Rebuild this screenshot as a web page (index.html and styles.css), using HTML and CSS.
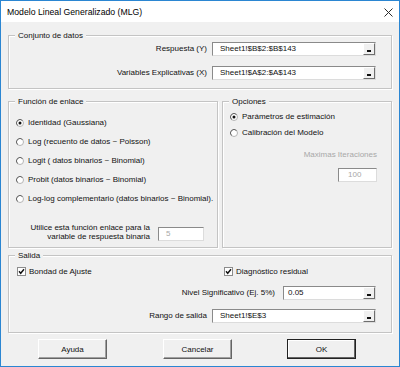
FILE: index.html
```html
<!DOCTYPE html>
<html lang="es">
<head>
  <meta charset="UTF-8">
  <meta name="viewport" content="width=device-width, initial-scale=1.0">
  <title>Modelo Lineal Generalizado (MLG)</title>
  <link rel="stylesheet" href="styles.css">
</head>
<body>
  <div class="window">
    <div class="titlebar">
      <span class="title">Modelo Lineal Generalizado (MLG)</span>
      <svg class="close" width="9" height="9" viewBox="0 0 9 9">
        <path d="M0.5 0.5 L8.5 8.5 M8.5 0.5 L0.5 8.5" stroke="#2b2b2b" stroke-width="1" fill="none"/>
      </svg>
    </div>

    <div class="content">
      <!-- Conjunto de datos -->
      <div class="group">
        <div class="group-title">Conjunto de datos</div>
        <div class="field-row first">
          <span class="label">Respuesta (Y)</span>
          <div class="ref"><span class="ref-text">Sheet1!$B$2:$B$143</span><span class="ref-btn"><i></i></span></div>
        </div>
        <div class="field-row">
          <span class="label">Variables Explicativas (X)</span>
          <div class="ref"><span class="ref-text">Sheet1!$A$2:$A$143</span><span class="ref-btn"><i></i></span></div>
        </div>
      </div>

      <div class="middle">
        <!-- Función de enlace -->
        <div class="group enlace">
          <div class="group-title">Función de enlace</div>
          <div class="radios">
            <div class="radio-row">
              <svg class="radio" width="8" height="8" viewBox="0 0 8 8">
                <circle cx="4" cy="4" r="3.5" fill="#fff" stroke="#b4b4b4"/>
                <path d="M1.5 6.5 A3.5 3.5 0 0 1 6.5 1.5" stroke="#6a6a6a" fill="none"/>
                <circle cx="4" cy="4" r="1.5" fill="#111"/>
              </svg>
              <span>Identidad (Gaussiana)</span>
            </div>
            <div class="radio-row">
              <svg class="radio" width="8" height="8" viewBox="0 0 8 8">
                <circle cx="4" cy="4" r="3.5" fill="#fff" stroke="#b4b4b4"/>
                <path d="M1.5 6.5 A3.5 3.5 0 0 1 6.5 1.5" stroke="#6a6a6a" fill="none"/>
              </svg>
              <span>Log (recuento de datos ~ Poisson)</span>
            </div>
            <div class="radio-row">
              <svg class="radio" width="8" height="8" viewBox="0 0 8 8">
                <circle cx="4" cy="4" r="3.5" fill="#fff" stroke="#b4b4b4"/>
                <path d="M1.5 6.5 A3.5 3.5 0 0 1 6.5 1.5" stroke="#6a6a6a" fill="none"/>
              </svg>
              <span>Logit ( datos binarios ~ Binomial)</span>
            </div>
            <div class="radio-row">
              <svg class="radio" width="8" height="8" viewBox="0 0 8 8">
                <circle cx="4" cy="4" r="3.5" fill="#fff" stroke="#b4b4b4"/>
                <path d="M1.5 6.5 A3.5 3.5 0 0 1 6.5 1.5" stroke="#6a6a6a" fill="none"/>
              </svg>
              <span>Probit (datos binarios ~ Binomial)</span>
            </div>
            <div class="radio-row">
              <svg class="radio" width="8" height="8" viewBox="0 0 8 8">
                <circle cx="4" cy="4" r="3.5" fill="#fff" stroke="#b4b4b4"/>
                <path d="M1.5 6.5 A3.5 3.5 0 0 1 6.5 1.5" stroke="#6a6a6a" fill="none"/>
              </svg>
              <span>Log-log complementario (datos binarios ~ Binomial).</span>
            </div>
          </div>
          <div class="binary-row">
            <span class="binary-label">Utilice esta función enlace para la<br>variable de respuesta binaria</span>
            <div class="textbox disabled binary">5</div>
          </div>
        </div>

        <!-- Opciones -->
        <div class="group opciones">
          <div class="group-title">Opciones</div>
          <div class="opt-radios">
            <div class="radio-row short">
              <svg class="radio" width="8" height="8" viewBox="0 0 8 8">
                <circle cx="4" cy="4" r="3.5" fill="#fff" stroke="#b4b4b4"/>
                <path d="M1.5 6.5 A3.5 3.5 0 0 1 6.5 1.5" stroke="#6a6a6a" fill="none"/>
                <circle cx="4" cy="4" r="1.5" fill="#111"/>
              </svg>
              <span>Parámetros de estimación</span>
            </div>
            <div class="radio-row short">
              <svg class="radio" width="8" height="8" viewBox="0 0 8 8">
                <circle cx="4" cy="4" r="3.5" fill="#fff" stroke="#b4b4b4"/>
                <path d="M1.5 6.5 A3.5 3.5 0 0 1 6.5 1.5" stroke="#6a6a6a" fill="none"/>
              </svg>
              <span>Calibración del Modelo</span>
            </div>
          </div>
          <div class="iter-label">Maximas Iteraciones</div>
          <div class="textbox disabled iter">100</div>
        </div>
      </div>

      <!-- Salida -->
      <div class="group">
        <div class="group-title">Salida</div>
        <div class="check-row">
          <div class="check first-check">
            <svg class="checkbox" width="9" height="9" viewBox="0 0 9 9">
              <rect x="0.5" y="0.5" width="8" height="8" fill="#fff" stroke="#8c8c8c"/>
              <path d="M2 4.3 L3.7 6.3 L7 2.2" stroke="#111" stroke-width="1.4" fill="none"/>
            </svg>
            <span>Bondad de Ajuste</span>
          </div>
          <div class="check">
            <svg class="checkbox" width="9" height="9" viewBox="0 0 9 9">
              <rect x="0.5" y="0.5" width="8" height="8" fill="#fff" stroke="#8c8c8c"/>
              <path d="M2 4.3 L3.7 6.3 L7 2.2" stroke="#111" stroke-width="1.4" fill="none"/>
            </svg>
            <span>Diagnóstico residual</span>
          </div>
        </div>
        <div class="nivel-row">
          <span class="label">Nivel Significativo (Ej. 5%)</span>
          <div class="ref nivel"><span class="ref-text">0.05</span><span class="ref-btn"><i></i></span></div>
        </div>
        <div class="field-row rango">
          <span class="label">Rango de salida</span>
          <div class="ref"><span class="ref-text">Sheet1!$E$3</span><span class="ref-btn"><i></i></span></div>
        </div>
      </div>

      <div class="buttons">
        <button class="btn ayuda">Ayuda</button>
        <button class="btn cancelar">Cancelar</button>
        <button class="btn ok">OK</button>
      </div>
    </div>
  </div>
</body>
</html>
```

FILE: styles.css
```css
body {
  margin: 0;
  font-family: "Liberation Sans", Arial, sans-serif;
  font-size: 8px;
  line-height: 10px;
  color: #111;
}

.window {
  width: 400px;
  height: 367px;
  box-sizing: border-box;
  border: 1px solid #2b86d2;
  background-color: #f0f0f0;
}

.titlebar {
  height: 21px;
  background-color: #fff;
  display: flex;
  align-items: center;
  justify-content: space-between;
  padding: 0 6px 0 6px;
}

.title {
  font-size: 8.7px;
  color: #000;
  padding-top: 1px;
}

.close {
  display: block;
  margin-top: 1px;
}

.content {
  padding: 0 7px;
  overflow: hidden;
}

/* group frames */
.group {
  border: 1px solid #c4c4c4;
  box-shadow: inset 1px 1px 0 #fff, 1px 1px 0 #fff;
  margin-top: 13px;
  padding: 0 15px 8px 7px;
}

.group-title {
  margin: -6px 0 0 -1px;
  padding: 0 3px;
  height: 11px;
  line-height: 11px;
  width: fit-content;
  background-color: #f0f0f0;
}

/* label + ref edit rows */
.field-row {
  display: grid;
  grid-template-columns: 1fr 164px;
  column-gap: 5px;
  align-items: center;
  margin-top: 10px;
}

.field-row.first {
  margin-top: 1px;
}

.label {
  text-align: right;
  white-space: nowrap;
}

.ref {
  height: 14px;
  box-sizing: border-box;
  border: 1px solid;
  border-color: #8a8a8a #dcdcdc #dcdcdc #8a8a8a;
  background-color: #fff;
  display: flex;
  align-items: center;
}

.ref-text {
  flex: 1;
  padding-left: 7px;
  color: #111;
}

.ref-btn {
  width: 12px;
  height: 12px;
  box-sizing: border-box;
  border: 1px solid;
  border-color: #fff #6e6e6e #6e6e6e #fff;
  background-color: #f0f0f0;
  display: flex;
  align-items: flex-end;
  justify-content: center;
  padding-bottom: 2px;
}

.ref-btn i {
  display: block;
  width: 4px;
  height: 2px;
  background-color: #111;
}

/* middle groups */
.middle {
  display: flex;
  margin-top: 12px;
}

.middle .group {
  margin-top: 0;
}

.enlace {
  width: 210px;
  box-sizing: border-box;
  padding: 0 13px 6px 7px;
}

.opciones {
  flex: 1;
  margin-left: 4px;
  padding: 0 14px 6px 7px;
}

.radios {
  margin-top: 6px;
}

.radio-row {
  height: 19px;
  display: flex;
  align-items: center;
  white-space: nowrap;
}

.radio-row.short {
  height: 16px;
}

.radio {
  display: block;
  margin-right: 4px;
  flex-shrink: 0;
}

.binary-row {
  display: flex;
  align-items: flex-end;
  justify-content: flex-end;
  margin-top: 15px;
}

.binary-label {
  text-align: right;
  line-height: 9px;
  margin-right: 8px;
}

.textbox {
  height: 14px;
  box-sizing: border-box;
  border: 1px solid;
  border-color: #8a8a8a #dcdcdc #dcdcdc #8a8a8a;
  background-color: #fff;
  line-height: 12px;
  padding-left: 7px;
}

.textbox.disabled {
  color: #a8a8a8;
}

.binary {
  width: 46px;
}

.opt-radios {
  margin-top: 2px;
}

.iter-label {
  margin-top: 9px;
  text-align: right;
  color: #a8a8a8;
}

.iter {
  width: 39px;
  margin: 8px 0 0 auto;
  padding-left: 9px;
}

/* salida */
.middle + .group {
  margin-top: 7px;
  padding-bottom: 9px;
}

.check-row {
  display: flex;
  height: 11px;
  align-items: center;
  margin-top: 5px;
  padding-left: 1px;
}

.check {
  display: flex;
  align-items: center;
}

.first-check {
  width: 207px;
}

.checkbox {
  display: block;
  margin-right: 3px;
}

.nivel-row {
  display: flex;
  align-items: center;
  justify-content: flex-end;
  margin-top: 9px;
}

.nivel-row .label {
  margin-right: 8px;
}

.ref.nivel {
  width: 93px;
}

.ref.nivel .ref-text {
  padding-left: 4px;
}

.field-row.rango {
  margin-top: 9px;
}

/* bottom buttons */
.buttons {
  display: flex;
  margin-top: 6px;
}

.btn {
  width: 69px;
  height: 20px;
  box-sizing: border-box;
  font-family: "Liberation Sans", Arial, sans-serif;
  font-size: 8px;
  color: #111;
  background-color: #f0f0f0;
  border: 1px solid;
  border-color: #fff #646464 #646464 #fff;
  box-shadow: inset -1px -1px 0 #a0a0a0;
  padding: 0;
}

.ayuda {
  margin-left: 30px;
}

.cancelar {
  margin-left: 56px;
}

.ok {
  margin-left: 55px;
  border-color: #222;
  box-shadow: inset -1px -1px 0 #646464, inset 1px 1px 0 #fff;
}
```
